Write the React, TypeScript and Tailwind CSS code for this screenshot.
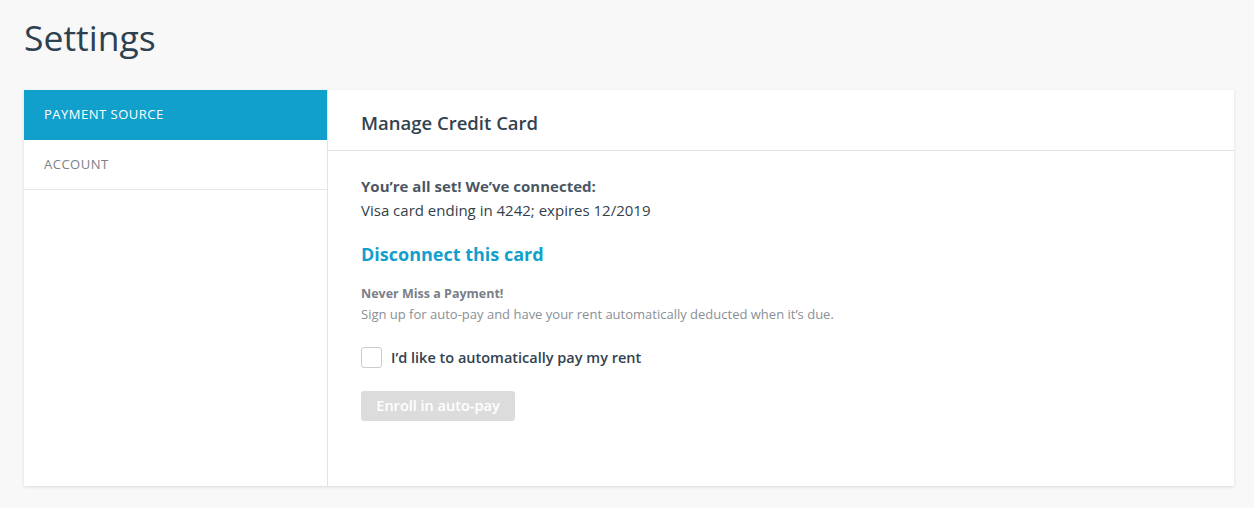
import { useState } from 'react'

export default function App() {
    const [autoPay, setAutoPay] = useState(false)
    const tabs = ['Payment Source', 'Account']
    const [active, setActive] = useState(0)

    return (
        <div className="min-h-[508px] bg-[#f8f8f8] pl-6 pr-5 pt-[13px] pb-5 font-['Open_Sans','Lato',sans-serif] text-[#2f4050]">
            <h1 className="text-[35.5px] leading-[48px] font-normal text-[#2e4150] mb-[29px]">Settings</h1>

            <div className="flex bg-white shadow-[0_1px_3px_rgba(0,0,0,0.12)] min-h-[396px]">
                <div className="w-[304px] shrink-0 border-r border-[#e3e3e3]">
                    {tabs.map((t, i) => (
                        <button
                            key={t}
                            onClick={() => setActive(i)}
                            className={`block w-full text-left px-5 h-[50px] text-[13px] tracking-[0.5px] uppercase border-b ${
                                i === active
                                    ? 'bg-[#11a0cc] text-white border-[#11a0cc]'
                                    : 'bg-white text-[#7b8187] border-[#e6e6e6]'
                            }`}
                        >
                            {t}
                        </button>
                    ))}
                </div>

                <div className="flex-1">
                    <div className="h-[61px] border-b border-[#e3e3e3] flex items-center px-[33px] pt-[5px]">
                        <h2 className="text-[18.5px] font-semibold text-[#33424f]">Manage Credit Card</h2>
                    </div>

                    <div className="px-[33px] pt-[23px]">
                        <p className="text-[15px] font-bold text-[#4b5663] leading-[24px]">You’re all set! We’ve connected:</p>
                        <p className="text-[15px] text-[#333f4a] leading-[24px]">Visa card ending in 4242; expires 12/2019</p>

                        <a href="#" className="block mt-[20px] text-[18px] font-bold text-[#139fcc] leading-[24px]">Disconnect this card</a>

                        <p className="mt-[17px] text-[12.5px] font-bold text-[#7a8089] leading-[21px]">Never Miss a Payment!</p>
                        <p className="text-[13px] text-[#8a8f96] leading-[21px]">Sign up for auto-pay and have your rent automatically deducted when it’s due.</p>

                        <label className="mt-[22px] flex items-center gap-[9px] cursor-pointer">
                            <input
                                type="checkbox"
                                checked={autoPay}
                                onChange={e => setAutoPay(e.target.checked)}
                                className="appearance-none w-[21px] h-[21px] rounded-[3px] border border-[#c9cdd2] bg-white checked:bg-[#11a0cc] checked:border-[#11a0cc]"
                            />
                            <span className="text-[14.5px] font-semibold text-[#33424f]">I’d like to automatically pay my rent</span>
                        </label>

                        <button
                            disabled={!autoPay}
                            className={`mt-[22px] h-[30px] w-[154px] rounded-[3px] text-[14.5px] font-semibold ${
                                autoPay ? 'bg-[#11a0cc] text-white' : 'bg-[#dcdcdc] text-white'
                            }`}
                        >
                            Enroll in auto-pay
                        </button>
                    </div>
                </div>
            </div>
        </div>
    )
}
